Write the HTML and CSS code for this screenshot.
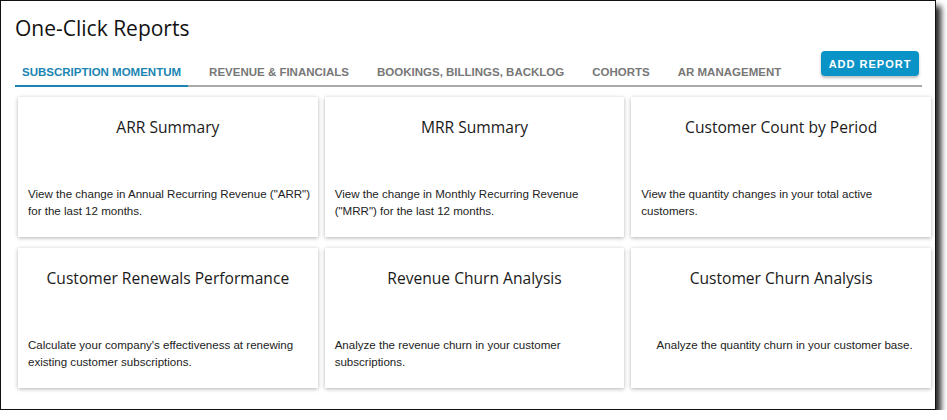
FILE: index.html
```html
<!DOCTYPE html>
<html lang="en">
<head>
    <meta charset="UTF-8">
    <title>One-Click Reports</title>
    <link rel="stylesheet" href="styles.css">
</head>
<body>
<div class="window">
    <h1 class="page-title">One-Click Reports</h1>
    <div class="tabbar">
        <nav class="tabs">
            <a href="#" class="tab active">Subscription Momentum</a>
            <a href="#" class="tab">Revenue &amp; Financials</a>
            <a href="#" class="tab">Bookings, Billings, Backlog</a>
            <a href="#" class="tab">Cohorts</a>
            <a href="#" class="tab">AR Management</a>
        </nav>
        <button class="add-btn">Add Report</button>
    </div>
    <div class="cards">
        <div class="card">
            <h2>ARR Summary</h2>
            <div class="desc"><p>View the change in Annual Recurring Revenue ("ARR") for the last 12 months.</p></div>
        </div>
        <div class="card">
            <h2>MRR Summary</h2>
            <div class="desc"><p>View the change in Monthly Recurring Revenue ("MRR") for the last 12 months.</p></div>
        </div>
        <div class="card">
            <h2>Customer Count by Period</h2>
            <div class="desc"><p>View the quantity changes in your total active customers.</p></div>
        </div>
        <div class="card">
            <h2>Customer Renewals Performance</h2>
            <div class="desc"><p>Calculate your company's effectiveness at renewing existing customer subscriptions.</p></div>
        </div>
        <div class="card">
            <h2>Revenue Churn Analysis</h2>
            <div class="desc"><p>Analyze the revenue churn in your customer subscriptions.</p></div>
        </div>
        <div class="card">
            <h2>Customer Churn Analysis</h2>
            <div class="desc"><p>Analyze the quantity churn in your customer base.</p></div>
        </div>
    </div>
</div>
</body>
</html>
```

FILE: styles.css
```css
body {
    margin: 0;
    background: #fff;
    font: 11.55px/17px "Liberation Sans", Arial, sans-serif;
    color: #222;
}

.window {
    box-sizing: border-box;
    width: 936px;
    height: 410px;
    border: 1px solid #111;
    background: #fff;
    box-shadow: 5px 6px 6px rgba(0,0,0,0.85);
    padding: 0 13px 0 14px;
}

.page-title {
    margin: 0;
    padding-top: 13px;
    font: 400 21px/28px "Open Sans", sans-serif;
    color: #111;
}

.tabbar {
    display: flex;
    justify-content: space-between;
    align-items: flex-end;
    margin-top: 9px;
    border-bottom: 2px solid #aaa;
}

.tabs {
    display: flex;
    gap: 14px;
}

.tab {
    display: block;
    padding: 0 7px 6px;
    margin-bottom: -2px;
    border-bottom: 2px solid transparent;
    font-weight: bold;
    font-size: 11.5px;
    line-height: 14px;
    text-transform: uppercase;
    text-decoration: none;
    color: #777;
}

.tab.active {
    color: #1a85b1;
    border-bottom-color: #1a85b1;
}

.add-btn {
    width: 98px;
    height: 25px;
    margin: 0 3px 9px 0;
    padding: 0;
    border: none;
    border-radius: 4px;
    background: #0a93c6;
    color: #fff;
    font: bold 11px "Liberation Sans", Arial, sans-serif;
    letter-spacing: 1px;
    text-transform: uppercase;
    box-shadow: 0 2px 3px rgba(0,0,0,0.25);
}

.cards {
    display: grid;
    grid-template-columns: repeat(3, 1fr);
    column-gap: 7px;
    row-gap: 11px;
    margin: 10px -9px 0 3px;
}

.card {
    height: 140px;
    box-sizing: border-box;
    padding: 0 10px;
    background: #fff;
    box-shadow: 0 1px 4px rgba(0,0,0,0.3);
}

.card h2 {
    margin: 0;
    padding-top: 20px;
    height: 69px;
    font: 400 15.6px/20px "Open Sans", sans-serif;
    text-align: center;
    color: #1a1a1a;
}

/* a little extra room on the right so long lines wrap like the original */
.desc {
    margin-right: -8px;
    padding-right: 1px;
    text-align: center;
}

.desc p {
    display: inline-block;
    margin: 0;
    text-align: left;
}
```
